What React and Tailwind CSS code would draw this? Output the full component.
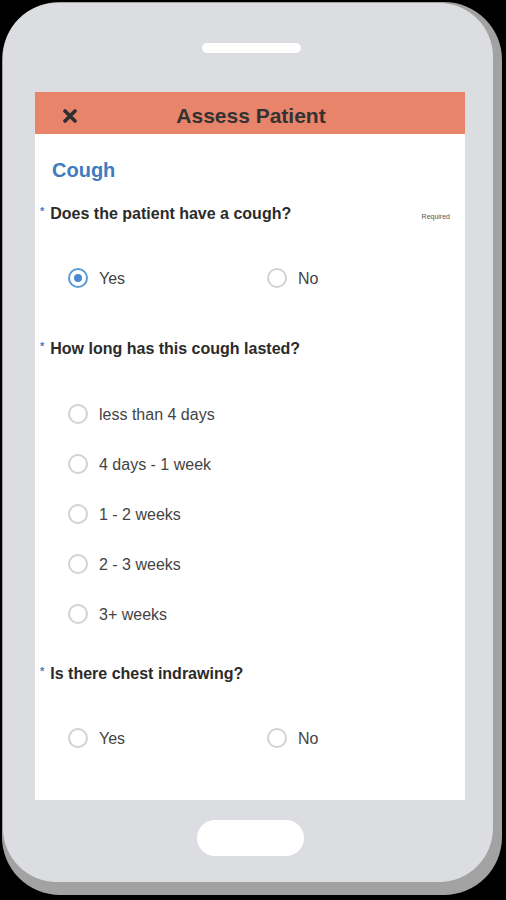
import React from "react";

const durations = ["less than 4 days", "4 days - 1 week", "1 - 2 weeks", "2 - 3 weeks", "3+ weeks"];

function Radio({ checked }) {
  return (
    <span
      className={
        "flex h-[20px] w-[20px] shrink-0 items-center justify-center rounded-full border-2 " +
        (checked ? "border-[#5b9bd5]" : "border-[#d2d2d2]")
      }
    >
      {checked && <span className="h-[8px] w-[8px] rounded-full bg-[#4a8ad0]" />}
    </span>
  );
}

function Option({ label, checked }) {
  return (
    <div className="flex h-[24px] items-center gap-[11px]">
      <Radio checked={checked} />
      <span className="mt-[2px] text-[16px] text-[#444]">{label}</span>
    </div>
  );
}

function Question({ text, required }) {
  return (
    <div className="flex h-[20px] items-center pl-[5px] pr-[15px]">
      <span className="mr-[6px] -mt-[5px] text-[11px] font-bold text-[#3f7bbd]">*</span>
      <span className="text-[16px] font-bold text-[#2b2b2b]">{text}</span>
      {required && <span className="ml-auto mt-[6px] text-[7px] text-[#555]">Required</span>}
    </div>
  );
}

function YesNo({ value }) {
  return (
    <div className="flex pl-[33px]">
      <div className="w-[199px]">
        <Option label="Yes" checked={value === "yes"} />
      </div>
      <Option label="No" checked={value === "no"} />
    </div>
  );
}

export default function App() {
  return (
    <div className="h-[900px] w-[506px] overflow-hidden bg-black pl-[2px] pt-[2px]" style={{ fontFamily: '"Liberation Sans", Arial, sans-serif' }}>
      {/* phone shell */}
      <div className="h-[893px] w-[500px] rounded-[58px] bg-[#a2a2a2] pl-[1px] pt-[1px]">
        <div className="flex h-[879px] w-[490px] flex-col rounded-[54px] bg-[#dcdde0]">
          <div className="ml-[199px] mt-[40px] h-[10px] w-[99px] rounded-full bg-white" />

          {/* screen */}
          <div className="ml-[32px] mt-[39px] flex h-[708px] w-[430px] flex-col bg-white">
            <div className="relative flex h-[42px] items-center justify-center bg-[#e8846a] pt-[6px]">
              <svg className="absolute left-[28px] top-[17px]" width="14" height="14" viewBox="0 0 14 14">
                <path d="M2 2 L12 12 M12 2 L2 12" stroke="#2f2f2f" strokeWidth="3.6" strokeLinecap="round" />
              </svg>
              <span className="ml-[2px] text-[21px] font-bold text-[#333]">Assess Patient</span>
            </div>

            <div className="mt-[24px] pl-[17px] text-[20px] font-bold leading-[24px] text-[#3f7bbd]">Cough</div>

            <div className="mt-[22px]">
              <Question text="Does the patient have a cough?" required />
            </div>
            <div className="mt-[42px]">
              <YesNo value="yes" />
            </div>

            <div className="mt-[49px]">
              <Question text="How long has this cough lasted?" />
            </div>
            <div className="mt-[43px] flex flex-col gap-[26px] pl-[33px]">
              {durations.map((d) => (
                <Option key={d} label={d} />
              ))}
            </div>

            <div className="mt-[38px]">
              <Question text="Is there chest indrawing?" />
            </div>
            <div className="mt-[42px]">
              <YesNo />
            </div>
          </div>

          <div className="ml-[194px] mt-[20px] h-[36px] w-[107px] rounded-full bg-white" />
        </div>
      </div>
    </div>
  );
}
